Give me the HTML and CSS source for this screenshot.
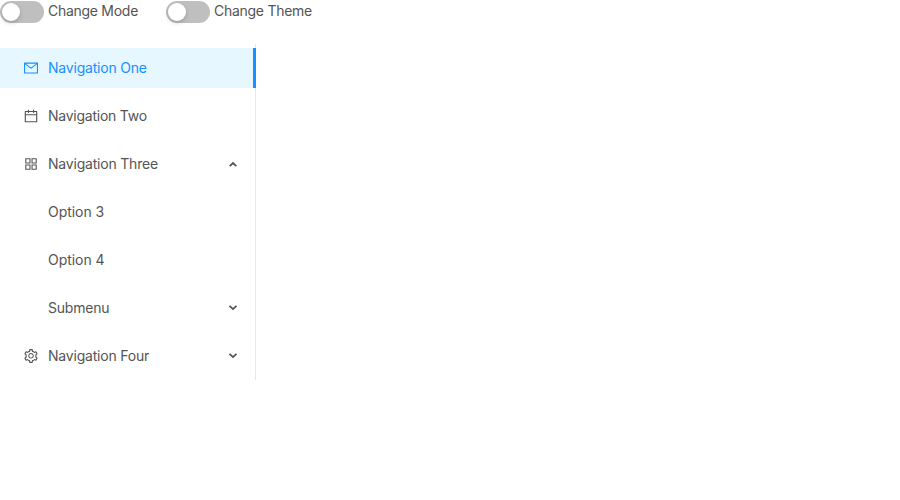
FILE: index.html
```html
<!DOCTYPE html>
<html lang="en">
<head>
<meta charset="utf-8">
<title>Navigation menu</title>
<link rel="stylesheet" href="styles.css">
</head>
<body>
<div class="controls">
  <label class="control"><button class="switch" type="button" role="switch" aria-checked="false"><span class="handle"></span></button><span class="label">Change Mode</span></label>
  <label class="control"><button class="switch" type="button" role="switch" aria-checked="false"><span class="handle"></span></button><span class="label">Change Theme</span></label>
</div>
<ul class="menu">
  <li class="item selected">
    <svg class="icon" viewBox="64 64 896 896"><path d="M928 160H96c-17.7 0-32 14.3-32 32v640c0 17.7 14.3 32 32 32h832c17.7 0 32-14.3 32-32V192c0-17.7-14.3-32-32-32zm-40 110.8V792H136V270.8l-27.6-21.5 39.3-50.5 42.8 33.3h643.100l42.8-33.3 39.3 50.5-27.700 21.5zM833.600 232L512 482 190.400 232l-42.800-33.300-39.300 50.500 27.600 21.500 341.600 265.600a55.990 55.990 0 0 0 68.700 0L888 270.800l27.600-21.500-39.300-50.500-42.700 33.200z"/></svg>
    <span class="text">Navigation One</span>
  </li>
  <li class="item">
    <svg class="icon" viewBox="64 64 896 896"><path d="M880 184H712v-64c0-4.400-3.600-8-8-8h-56c-4.400 0-8 3.600-8 8v64H384v-64c0-4.400-3.600-8-8-8h-56c-4.400 0-8 3.600-8 8v64H144c-17.700 0-32 14.300-32 32v664c0 17.700 14.300 32 32 32h736c17.700 0 32-14.300 32-32V216c0-17.700-14.300-32-32-32zm-40 656H184V460h656v380zM184 392V256h128v48c0 4.400 3.600 8 8 8h56c4.400 0 8-3.600 8-8v-48h256v48c0 4.400 3.600 8 8 8h56c4.400 0 8-3.600 8-8v-48h128v136H184z"/></svg>
    <span class="text two">Navigation Two</span>
  </li>
  <li class="item">
    <svg class="icon" viewBox="64 64 896 896"><path d="M464 144H160c-8.800 0-16 7.200-16 16v304c0 8.800 7.200 16 16 16h304c8.800 0 16-7.200 16-16V160c0-8.800-7.200-16-16-16zm-52 268H212V212h200v200zm452-268H560c-8.800 0-16 7.200-16 16v304c0 8.800 7.200 16 16 16h304c8.800 0 16-7.200 16-16V160c0-8.800-7.200-16-16-16zm-52 268H612V212h200v200zM464 544H160c-8.800 0-16 7.200-16 16v304c0 8.800 7.200 16 16 16h304c8.800 0 16-7.200 16-16V560c0-8.800-7.200-16-16-16zm-52 268H212V612h200v200zm452-268H560c-8.800 0-16 7.200-16 16v304c0 8.800 7.200 16 16 16h304c8.800 0 16-7.200 16-16V560c0-8.800-7.200-16-16-16zm-52 268H612V612h200v200z"/></svg>
    <span class="text">Navigation Three</span>
    <svg class="arrow" viewBox="0 0 10 6"><path d="M1.700 5.200 5 2 8.300 5.200"/></svg>
  </li>
  <li class="item child"><span class="text option">Option 3</span></li>
  <li class="item child"><span class="text option">Option 4</span></li>
  <li class="item child"><span class="text">Submenu</span>
    <svg class="arrow" viewBox="0 0 10 6"><path d="M1.500 .8 5 4.100 8.500 .8"/></svg>
  </li>
  <li class="item">
    <svg class="icon" viewBox="64 64 896 896"><path d="M924.800 625.700l-65.500-56c3.100-19 4.700-38.400 4.700-57.800s-1.600-38.800-4.700-57.800l65.500-56a32.030 32.030 0 0 0 9.300-35.200l-.9-2.600a443.740 443.740 0 0 0-79.700-137.900l-1.800-2.100a32.120 32.120 0 0 0-35.100-9.500l-81.300 28.900c-30-24.600-63.500-44-99.700-57.600l-15.700-85a32.050 32.050 0 0 0-25.800-25.700l-2.700-.5c-52.100-9.400-106.900-9.400-159 0l-2.700.5a32.050 32.050 0 0 0-25.800 25.700l-15.800 85.400a351.860 351.860 0 0 0-99 57.400l-81.900-29.100a32 32 0 0 0-35.100 9.500l-1.800 2.100a446.020 446.020 0 0 0-79.700 137.900l-.9 2.600c-4.500 12.500-.8 26.500 9.300 35.200l66.300 56.600c-3.100 18.800-4.600 38-4.600 57.100 0 19.200 1.500 38.400 4.600 57.100L99 625.500a32.030 32.030 0 0 0-9.300 35.200l.9 2.600c18.100 50.400 44.900 96.900 79.700 137.900l1.800 2.100a32.120 32.120 0 0 0 35.100 9.500l81.900-29.100c29.800 24.500 63.100 43.900 99 57.400l15.800 85.400a32.050 32.050 0 0 0 25.800 25.700l2.700.5a449.400 449.400 0 0 0 159 0l2.700-.5a32.050 32.050 0 0 0 25.800-25.700l15.700-85a350 350 0 0 0 99.700-57.600l81.300 28.900a32 32 0 0 0 35.100-9.500l1.800-2.100c34.800-41.100 61.600-87.500 79.700-137.900l.9-2.600c4.500-12.300.8-26.300-9.300-35zM788.300 465.900c2.500 15.100 3.800 30.600 3.800 46.100s-1.300 31-3.800 46.100l-6.600 40.100 74.700 63.900a370.030 370.030 0 0 1-42.600 73.600L721 702.800l-31.400 25.800c-23.900 19.600-50.500 35-79.300 45.800l-38.100 14.300-17.900 97a377.500 377.500 0 0 1-85 0l-17.900-97.200-37.800-14.500c-28.500-10.800-55-26.200-78.700-45.700l-31.400-25.900-93.400 33.200c-17-22.900-31.200-47.600-42.600-73.600l75.500-64.500-6.500-40c-2.400-14.900-3.700-30.300-3.700-45.500 0-15.300 1.200-30.600 3.700-45.500l6.500-40-75.500-64.500c11.300-26.100 25.600-50.700 42.600-73.600l93.400 33.200 31.400-25.900c23.700-19.500 50.200-34.900 78.700-45.700l37.900-14.300 17.900-97.200c28.100-3.200 56.800-3.200 85 0l17.900 97 38.100 14.300c28.700 10.800 55.400 26.200 79.300 45.800l31.400 25.800 92.800-32.900c17 22.900 31.200 47.600 42.600 73.600L781.800 426l6.500 39.900zM512 326c-97.200 0-176 78.800-176 176s78.800 176 176 176 176-78.800 176-176-78.800-176-176-176zm79.200 255.200A111.600 111.600 0 0 1 512 614c-29.900 0-58-11.700-79.200-32.800A111.600 111.600 0 0 1 400 502c0-29.900 11.700-58 32.800-79.200C454 401.600 482.100 390 512 390c29.900 0 58 11.600 79.200 32.800A111.600 111.600 0 0 1 624 502c0 29.900-11.700 58-32.800 79.200z"/></svg>
    <span class="text">Navigation Four</span>
    <svg class="arrow" viewBox="0 0 10 6"><path d="M1.500 .8 5 4.100 8.500 .8"/></svg>
  </li>
</ul>
</body>
</html>
```
FILE: styles.css
```css
* { box-sizing: border-box; }
body {
  margin: 0;
  background: #fff;
  color: #545454;
  font: 14px/22px Inter, "Liberation Sans", sans-serif;
}
.controls { display: flex; gap: 28px; height: 24px; }
.control { display: flex; gap: 4px; }
.switch {
  width: 44px;
  height: 22px;
  margin-top: 1px;
  padding: 2px;
  border: 0;
  border-radius: 11px;
  background: #bfbfbf;
}
.handle {
  display: block;
  width: 18px;
  height: 18px;
  border-radius: 50%;
  background: #fff;
  box-shadow: 0 2px 4px rgba(0, 35, 11, 0.2);
}
.label, .text { white-space: nowrap; letter-spacing: -0.2px; }
.label { letter-spacing: -0.28px; }
.two { letter-spacing: -0.24px; }
.option { letter-spacing: -0.04px; }
.menu {
  width: 256px;
  height: 336px;
  margin: 20px 0 0;
  padding: 4px 0 0;
  list-style: none;
  border-right: 1px solid #e8e8e8;
}
.item {
  display: flex;
  align-items: center;
  width: 256px;
  height: 40px;
  margin-bottom: 8px;
  padding: 0 18px 0 24px;
}
.selected {
  color: #1890ff;
  background: #e6f7ff;
  border-right: 3px solid #1890ff;
}
.child { padding-left: 48px; }
.icon { width: 14px; height: 14px; margin-right: 10px; fill: currentColor; }
.arrow {
  width: 10px;
  height: 6px;
  margin-left: auto;
  overflow: visible;
  fill: none;
  stroke: currentColor;
  stroke-width: 1.8;
}
```
